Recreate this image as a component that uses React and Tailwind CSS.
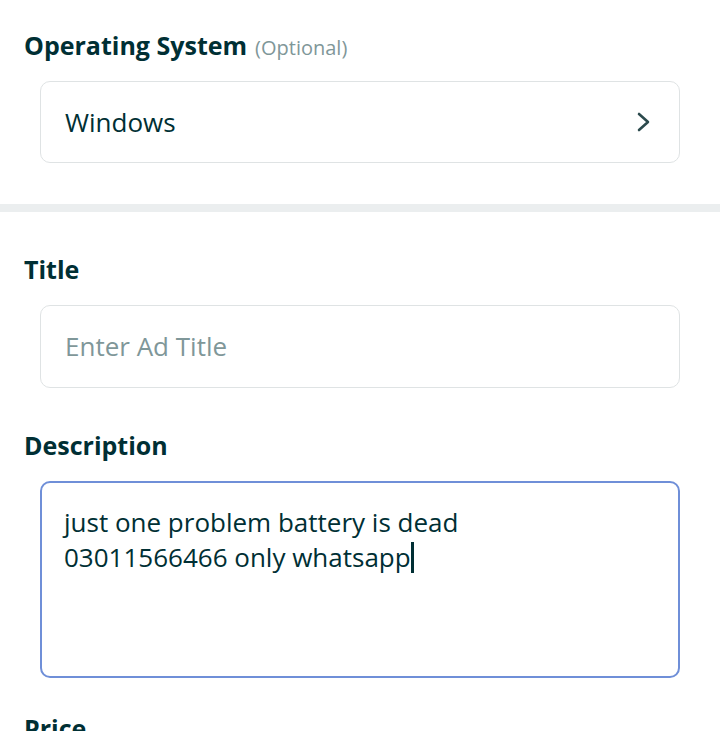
const font = { fontFamily: "'Open Sans', 'Noto Sans', sans-serif" };

function Label({ children, hint }) {
  return (
    <div className="px-6 h-[26px] flex items-baseline gap-2">
      <span className="text-[25px] font-bold text-[#002f34] leading-none">{children}</span>
      {hint && <span className="text-[20px] text-[#7f9799] leading-none">{hint}</span>}
    </div>
  );
}

function Chevron() {
  return (
    <svg width="16" height="22" viewBox="0 0 16 22" fill="none" stroke="#2c4a4d" strokeWidth="2.6" strokeLinecap="round" strokeLinejoin="round">
      <path d="M3 3l9 8-9 8" />
    </svg>
  );
}

export default function App() {
  return (
    <div className="w-[720px] h-[731px] overflow-hidden bg-white" style={font}>
      {/* operating system picker */}
      <div className="pt-[33px] pb-[41px]">
        <Label hint="(Optional)">Operating System</Label>
        <div className="mx-10 mt-[22px] h-[82px] rounded-[10px] border border-[#dfe3e4] flex items-center justify-between pl-6 pr-[27px]">
          <span className="text-[26px] text-[#002f34]">Windows</span>
          <Chevron />
        </div>
      </div>

      <div className="h-2 bg-[#ebeeef]" />

      {/* title */}
      <div className="pt-[45px]">
        <Label>Title</Label>
        <div className="mx-10 mt-[22px] h-[83px] rounded-[10px] border border-[#dfe3e4] flex items-center px-6">
          <span className="text-[26px] text-[#7f9799]">Enter Ad Title</span>
        </div>
      </div>

      {/* description */}
      <div className="pt-[45px]">
        <Label>Description</Label>
        <div className="mx-10 mt-[22px] h-[197px] rounded-[10px] border-2 border-[#6f8fd8] px-[22px] pt-[22px]">
          <p className="text-[26px] leading-[35px] text-[#002f34]">
            just one problem battery is dead
            <br />
            03011566466 only whatsapp
            <span className="inline-block w-[3px] h-[31px] bg-[#002f34] align-[-6px]" />
          </p>
        </div>
      </div>

      <div className="pt-[38px]">
        <Label>Price</Label>
      </div>
    </div>
  );
}
